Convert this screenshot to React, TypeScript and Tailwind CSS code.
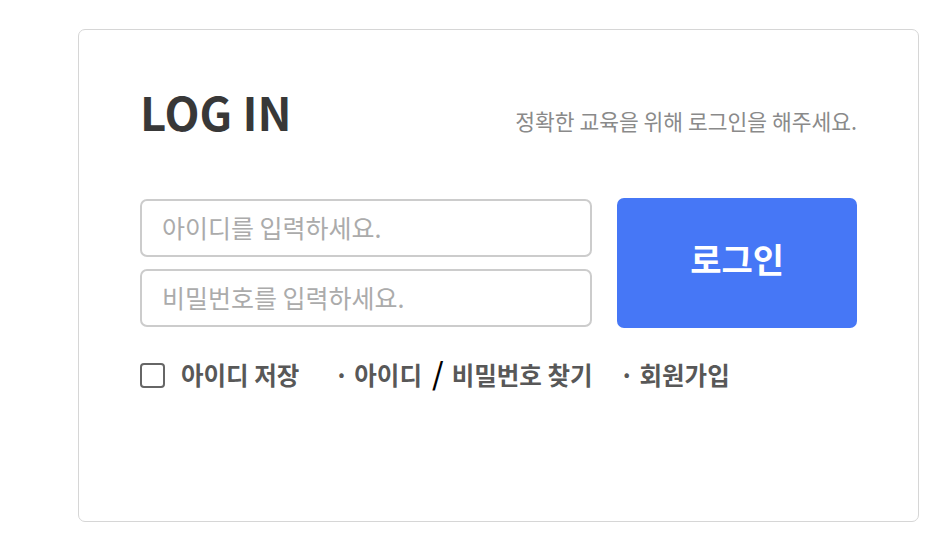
import React from "react";

const FONT = "font-['Noto_Sans_CJK_KR','Noto_Sans',sans-serif]";

export default function App() {
  return (
    <div className={`min-h-screen bg-white ${FONT}`}>
      <div className="pt-[29px] pl-[78px]">
        {/* Login card */}
        <div className="w-[841px] h-[493px] border border-[#d6d6d6] rounded-[7px] px-[61px] pt-[53px]">
          <div className="flex items-end justify-between">
            <h1 className="text-[45.5px] leading-[56px] font-bold text-[#383838]">LOG IN</h1>
            <p className="text-[21.5px] leading-[28px] text-[#8a8a8a] mb-[4px]">
              정확한 교육을 위해 로그인을 해주세요.
            </p>
          </div>

          <div className="flex mt-[59px] gap-[25px]">
            <div className="flex flex-col gap-[12px] w-[453px] pt-px">
              <input
                type="text"
                placeholder="아이디를 입력하세요."
                className="h-[58px] border-2 border-[#cccccc] rounded-[7px] px-[20px] pb-[2px] text-[25px] text-[#333] placeholder:text-[#ababab] outline-none"
              />
              <input
                type="password"
                placeholder="비밀번호를 입력하세요."
                className="h-[58px] border-2 border-[#cccccc] rounded-[7px] px-[20px] pb-[2px] text-[25px] text-[#333] placeholder:text-[#ababab] outline-none"
              />
            </div>
            <button
              type="button"
              className="w-[240px] h-[130px] rounded-[7px] bg-[#4677f6] text-white text-[34px] font-bold pb-[10px]"
            >
              로그인
            </button>
          </div>

          <div className="flex items-center mt-[32px] text-[24.5px] leading-[30px] font-bold text-[#585858]">
            <label className="flex items-center">
              <span className="w-[25px] h-[25px] border-2 border-[#666] rounded-[4px] bg-white" />
              <span className="ml-[16px]">아이디 저장</span>
            </label>
            <a className="ml-[35px] flex items-center">
              <span>· 아이디</span>
              <span className="ml-[10px] mr-[8px] text-black font-medium text-[30px] leading-none -translate-y-[3px]">/</span>
              <span>비밀번호 찾기</span>
            </a>
            <a className="ml-[27px]">· 회원가입</a>
          </div>
        </div>
      </div>
    </div>
  );
}
